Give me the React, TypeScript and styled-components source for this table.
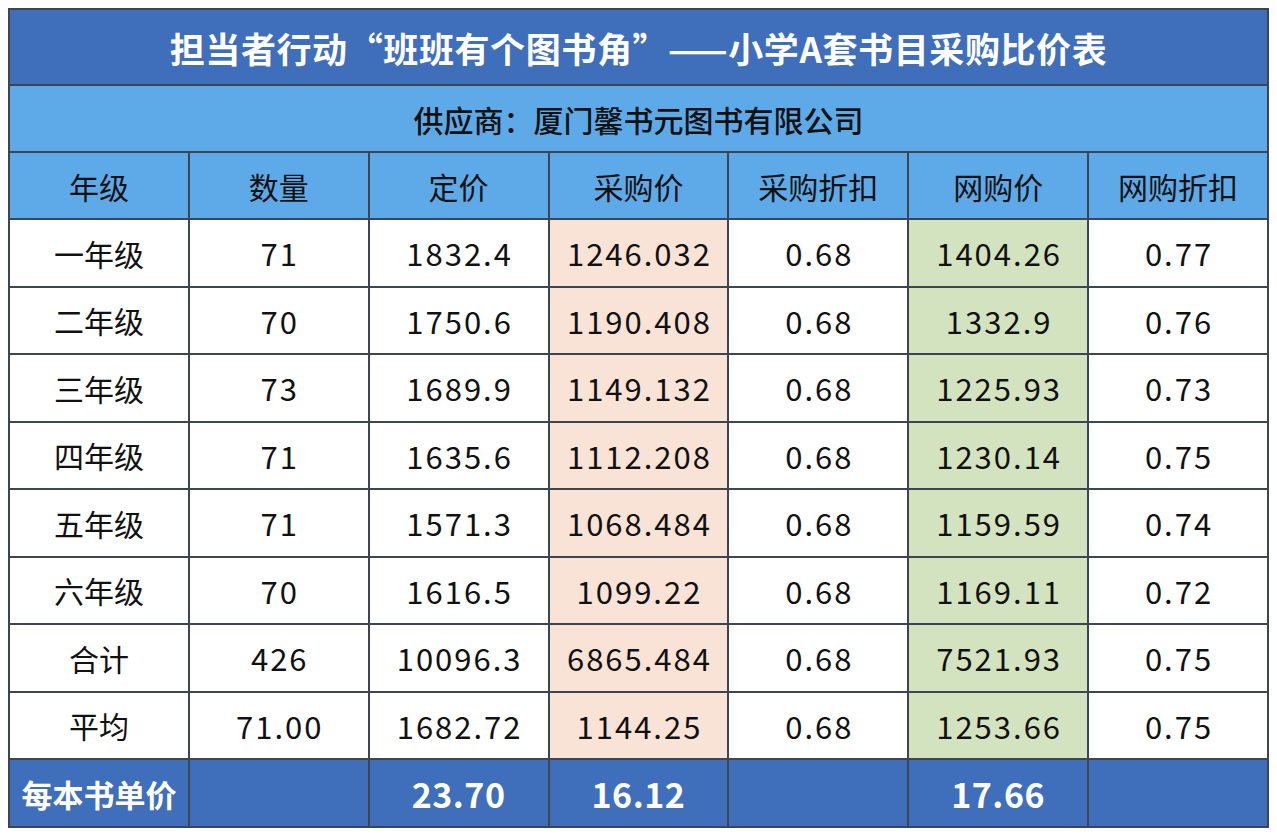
import styled, { createGlobalStyle } from 'styled-components';

const GlobalStyle = createGlobalStyle`
  body {
    margin: 8px;
    background: #ffffff;
    font-family: "Noto Sans CJK SC", "Noto Sans", sans-serif;
  }
`;

type Tone = 'plain' | 'peach' | 'green';

const tones: Record<Tone, string> = {
  plain: '#ffffff',
  peach: '#f8e3d6',
  green: '#d4e3bf',
};

const Sheet = styled.table`
  width: 1261px;
  table-layout: fixed;
  border-collapse: collapse;
  border: 2px solid #3d4650;
  color: #111111;

  td, th {
    border: 2px solid #3d4650;
    padding: 0;
    text-align: center;
    vertical-align: middle;
  }
`;

const TitleCell = styled.th`
  height: 74px;
  background: #3f6eba;
  color: #ffffff;
  font-size: 35px;
  font-weight: 700;
  letter-spacing: 0.6px;
`;

const SupplierCell = styled.th`
  height: 65px;
  background: #5eaae8;
  font-size: 30px;
  font-weight: 500;
`;

const HeadCell = styled.th`
  height: 65px;
  background: #5eaae8;
  font-size: 30px;
  font-weight: 400;
`;

const Cell = styled.td<{ $tone?: Tone }>`
  height: 65.5px;
  background: ${p => tones[p.$tone || 'plain']};
  font-size: 31px;
  font-weight: 400;
  letter-spacing: 2px;
  text-indent: 2px;
`;

const LabelCell = styled(Cell)`
  font-size: 30px;
  letter-spacing: 0;
  text-indent: 0;
`;

const FootCell = styled.td<{ $label?: boolean }>`
  height: 66px;
  background: #3f6eba;
  color: #ffffff;
  font-size: ${p => (p.$label ? '31px' : '34px')};
  letter-spacing: ${p => (p.$label ? '0' : '0.5px')};
  font-weight: 700;
`;

const headers = ['年级', '数量', '定价', '采购价', '采购折扣', '网购价', '网购折扣'];

const rows = [
  ['一年级', '71', '1832.4', '1246.032', '0.68', '1404.26', '0.77'],
  ['二年级', '70', '1750.6', '1190.408', '0.68', '1332.9', '0.76'],
  ['三年级', '73', '1689.9', '1149.132', '0.68', '1225.93', '0.73'],
  ['四年级', '71', '1635.6', '1112.208', '0.68', '1230.14', '0.75'],
  ['五年级', '71', '1571.3', '1068.484', '0.68', '1159.59', '0.74'],
  ['六年级', '70', '1616.5', '1099.22', '0.68', '1169.11', '0.72'],
  ['合计', '426', '10096.3', '6865.484', '0.68', '7521.93', '0.75'],
  ['平均', '71.00', '1682.72', '1144.25', '0.68', '1253.66', '0.75'],
];

const footer = ['每本书单价', '', '23.70', '16.12', '', '17.66', ''];

function toneFor(col: number): Tone {
  if (col === 3) return 'peach';
  if (col === 5) return 'green';
  return 'plain';
}

export default function App() {
  return (
    <>
      <GlobalStyle />
      <Sheet>
        <thead>
          <tr>
            <TitleCell colSpan={7}>担当者行动“班班有个图书角”——小学A套书目采购比价表</TitleCell>
          </tr>
          <tr>
            <SupplierCell colSpan={7}>供应商：厦门馨书元图书有限公司</SupplierCell>
          </tr>
          <tr>
            {headers.map(h => (
              <HeadCell key={h}>{h}</HeadCell>
            ))}
          </tr>
        </thead>
        <tbody>
          {rows.map(row => (
            <tr key={row[0]}>
              {row.map((value, i) =>
                i === 0 ? (
                  <LabelCell key={i}>{value}</LabelCell>
                ) : (
                  <Cell key={i} $tone={toneFor(i)}>{value}</Cell>
                )
              )}
            </tr>
          ))}
          <tr>
            {footer.map((value, i) => (
              <FootCell key={i} $label={i === 0}>{value}</FootCell>
            ))}
          </tr>
        </tbody>
      </Sheet>
    </>
  );
}
